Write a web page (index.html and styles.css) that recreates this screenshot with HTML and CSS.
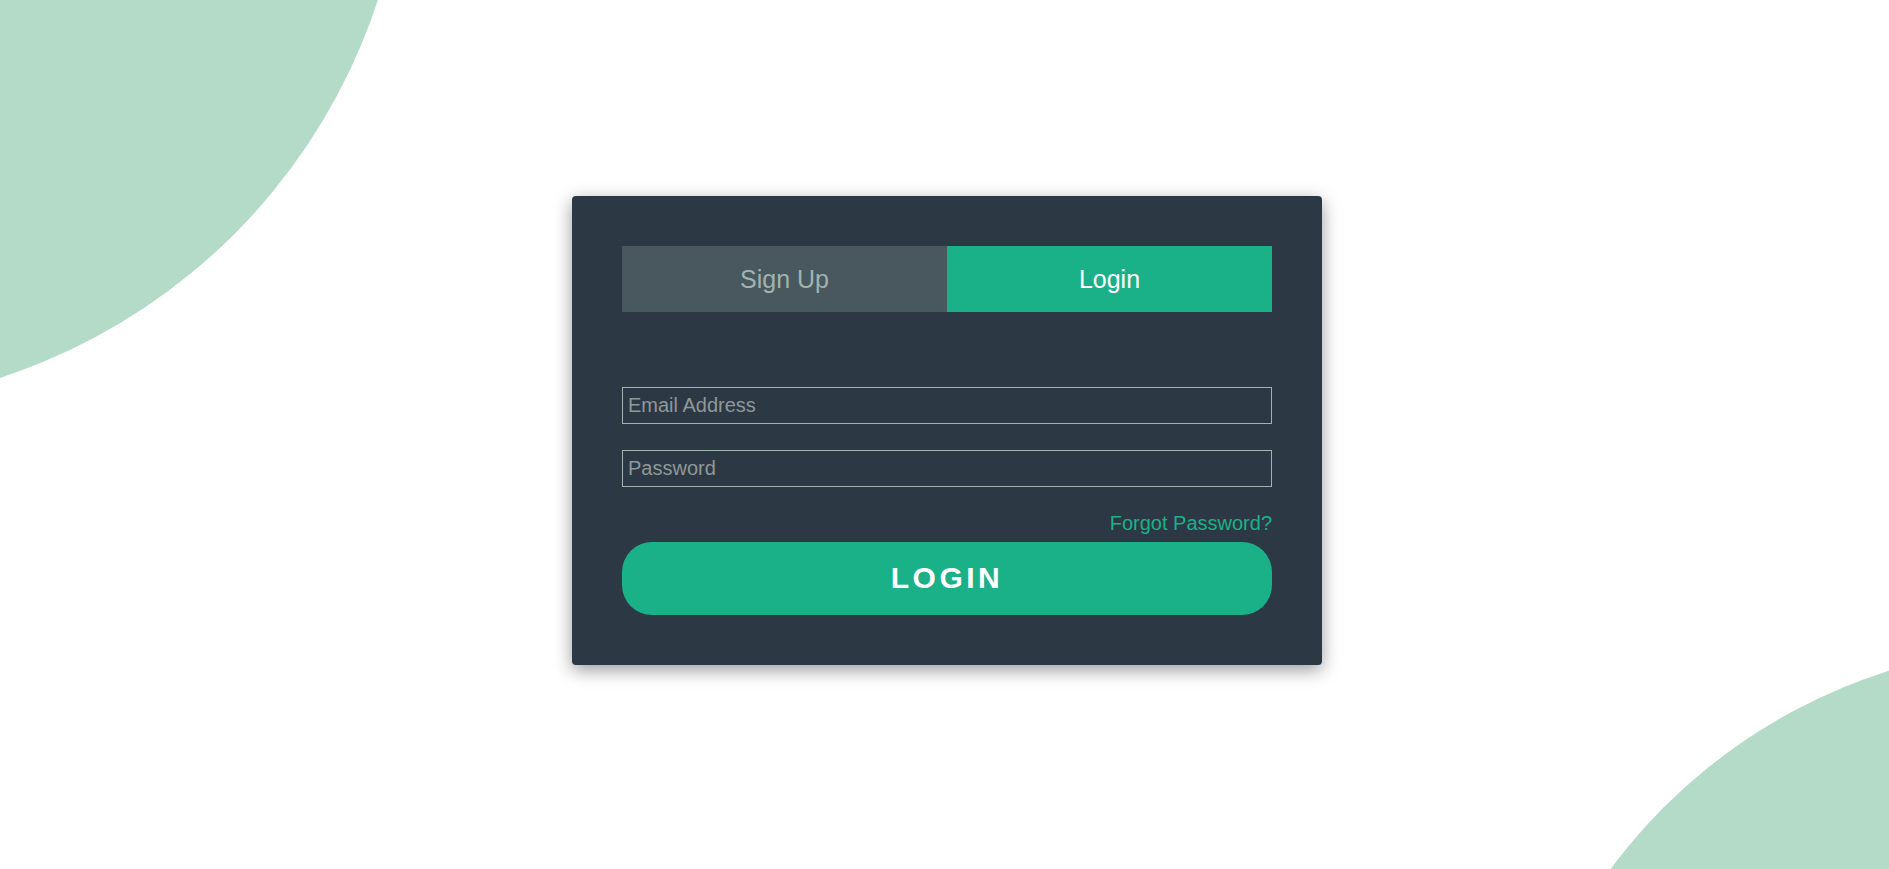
FILE: index.html
```html
<!DOCTYPE html>
<html lang="en">
<head>
<meta charset="utf-8">
<title>Login</title>
<link rel="stylesheet" href="styles.css">
</head>
<body>
<div class="page">
  <div class="blob blob-tl"></div>
  <div class="blob blob-br"></div>
  <div class="card">
    <div class="tabs">
      <button class="tab" type="button">Sign Up</button>
      <button class="tab tab-active" type="button">Login</button>
    </div>
    <form class="form">
      <input class="field" type="email" placeholder="Email Address">
      <input class="field field-password" type="password" placeholder="Password">
      <a class="forgot" href="#">Forgot Password?</a>
      <button class="submit" type="button">LOGIN</button>
    </form>
  </div>
</div>
</body>
</html>
```

FILE: styles.css
```css
* {
  box-sizing: border-box;
}

html, body {
  margin: 0;
  padding: 0;
  height: 100%;
}

body {
  background: #ffffff;
  font-family: "Liberation Sans", Arial, sans-serif;
  overflow: hidden;
}

.page {
  position: relative;
  height: 100vh;
  display: flex;
  align-items: center;
  justify-content: center;
  padding-left: 5px;
  padding-bottom: 8px;
  overflow: hidden;
}

.blob {
  position: absolute;
  border-radius: 50%;
  background: #b3dbc8;
}

.blob-tl {
  width: 1180px;
  height: 1180px;
  left: -773px;
  top: -773px;
}

.blob-br {
  width: 1110px;
  height: 1110px;
  right: -722px;
  bottom: -886px;
}

.card {
  position: relative;
  width: 750px;
  padding: 50px;
  background: #2c3945;
  border-radius: 4px;
  box-shadow: 0 5px 18px rgba(0, 0, 0, 0.4);
}

.tabs {
  display: flex;
  margin-bottom: 75px;
}

.tab {
  flex: 1;
  height: 66px;
  border: 0;
  margin: 0;
  padding: 0;
  font-family: inherit;
  font-size: 25px;
  background: #49585f;
  color: #a0b3b0;
  cursor: pointer;
}

.tab-active {
  background: #1ab188;
  color: #ffffff;
}

.form {
  display: flex;
  flex-direction: column;
  margin: 0;
}

.field {
  display: block;
  width: 100%;
  height: 37px;
  margin: 0;
  padding: 6px 5px;
  border: 1px solid #a0b3b0;
  border-radius: 0;
  background: transparent;
  font-family: inherit;
  font-size: 20px;
  line-height: 23px;
  color: #ffffff;
  outline: none;
}

.field::placeholder {
  color: #8f9898;
}

.field-password {
  margin-top: 26px;
}

.forgot {
  align-self: flex-end;
  margin-top: 25px;
  font-size: 20px;
  line-height: 23px;
  color: #1ab188;
  text-decoration: none;
}

.submit {
  margin-top: 7px;
  width: 100%;
  height: 73px;
  padding: 0 0 2px;
  border: 0;
  border-radius: 30px;
  background: #1ab188;
  color: #ffffff;
  font-family: inherit;
  font-size: 30px;
  font-weight: bold;
  letter-spacing: 3.5px;
  cursor: pointer;
}
```
